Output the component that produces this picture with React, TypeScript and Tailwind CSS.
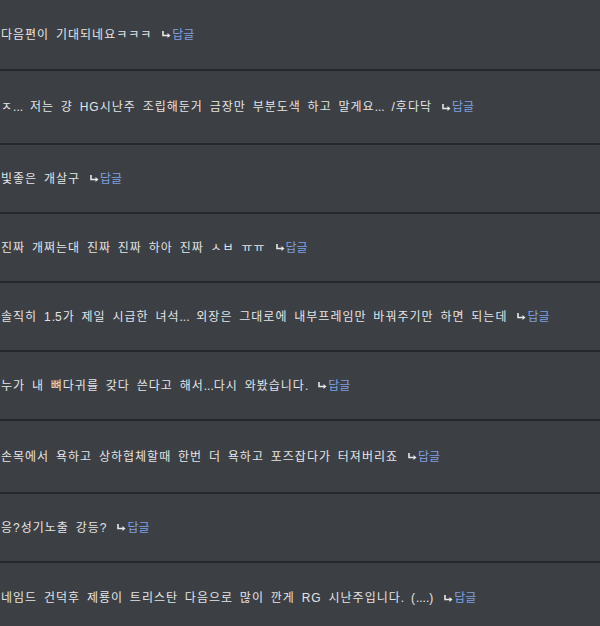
const comments = [
  { text: "다음편이 기대되네요ㅋㅋㅋ", h: "h-[71px]" },
  { text: "ㅈ... 저는 걍 HG시난주 조립해둔거 금장만 부분도색 하고 말게요... /후다닥", h: "h-[74px]" },
  { text: "빛좋은 개살구", h: "h-[69px]" },
  { text: "진짜 개쩌는대 진짜 진짜 하아 진짜 ㅅㅂ ㅠㅠ", h: "h-[69px]" },
  { text: "솔직히 1.5가 제일 시급한 녀석... 외장은 그대로에 내부프레임만 바꿔주기만 하면 되는데", h: "h-[69px]" },
  { text: "누가 내 뼈다귀를 갖다 쓴다고 해서...다시 와봤습니다.", h: "h-[69px]" },
  { text: "손목에서 욕하고 상하협체할때 한번 더 욕하고 포즈잡다가 터져버리죠", h: "h-[73px]" },
  { text: "응?성기노출 강등?", h: "h-[69px]" },
  { text: "네임드 건덕후 제룡이 트리스탄 다음으로 많이 깐게 RG 시난주입니다. (....)", h: "h-[70px]" },
]

function ReplyArrow() {
  return (
    <svg width="9" height="7" viewBox="0 0 9 7" className="mr-[1px]">
      <path d="M1 0v4.5h5" stroke="#e8e8e8" strokeWidth="1.6" fill="none" />
      <path d="M5.5 2l3 2.5-3 2.5z" fill="#e8e8e8" />
    </svg>
  )
}

// dots in the original are tighter than the hangul, so they skip the extra tracking
function CommentText({ text }: { text: string }) {
  return (
    <span>
      {text.split(/(\.+)/).map((part, i) =>
        part.startsWith(".") ? (
          <span key={i} className="tracking-normal">
            {part}
          </span>
        ) : (
          <span key={i}>{part}</span>
        )
      )}
    </span>
  )
}

export default function App() {
  return (
    <div className="w-[600px] h-[626px] overflow-hidden bg-[#3c3f44]">
      {comments.map((c, i) => (
        <div
          key={i}
          className={`${c.h} flex items-center ${
            i < comments.length - 1 ? "border-b-2 border-[#26282c]" : ""
          }`}
        >
          <p className="pl-[1px] text-[12px] leading-none text-[#e4e4e4] tracking-[1px] [word-spacing:2.5px] font-['Liberation_Sans','Noto_Sans_CJK_KR',sans-serif] flex items-center whitespace-nowrap">
            <CommentText text={c.text} />
            <span className="ml-[10px] inline-flex items-center text-[#7fa0e0] tracking-normal">
              <ReplyArrow />
              답글
            </span>
          </p>
        </div>
      ))}
    </div>
  )
}
